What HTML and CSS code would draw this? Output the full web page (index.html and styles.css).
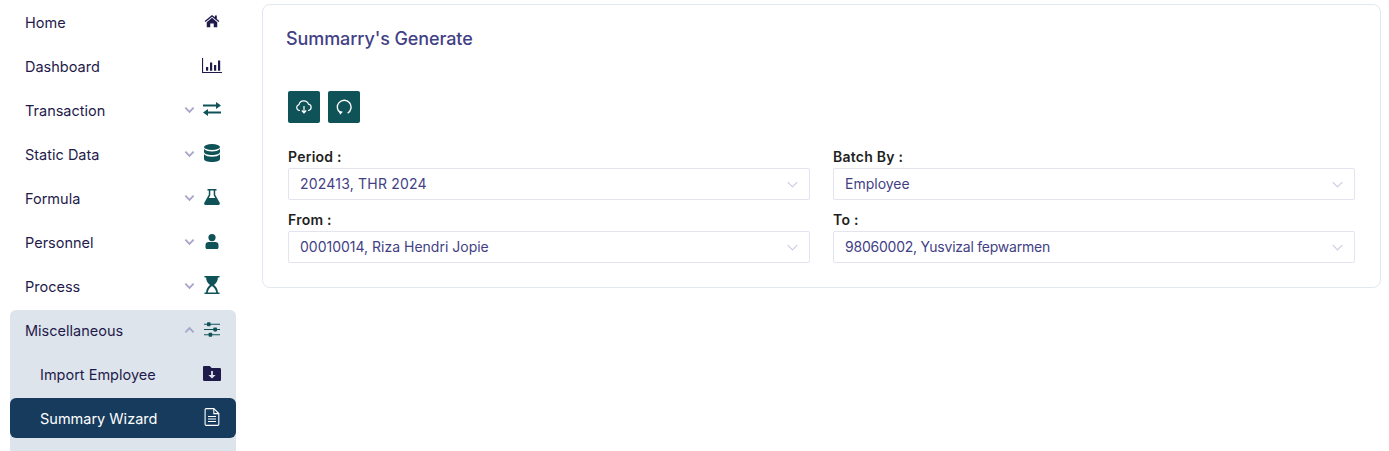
FILE: index.html
```html
<!DOCTYPE html>
<html lang="en">
<head>
<meta charset="utf-8">
<title>Summary Wizard</title>
<link rel="stylesheet" href="styles.css">
</head>
<body>
<div class="app">
  <nav class="sidebar">
    <a class="item"><span class="label">Home</span>
      <svg class="icon navy h14" viewBox="0 0 18 16"><path d="M9 1 .6 8l1 1.200L9 3.100l7.400 6.100 1-1.200L14.500 5.600V1.600h-2.200v2.200L9 1Z"/><path d="M9 4.400 3 9.400v5.600h4v-4.200h4V15h4V9.400L9 4.400Z"/></svg></a>
    <a class="item"><span class="label">Dashboard</span>
      <svg class="icon navy h15" viewBox="0 0 20 15"><path d="M0 0h1.100v13.900H20V15H0V0Z"/><path d="M4 9h2.200v3.800H4zM8 4.500h2.200v8.300H8zM12 7h2.200v5.800H12zM16 2.600h2.200v10.200H16z"/></svg></a>
    <a class="item"><span class="label">Transaction</span>
      <svg class="chev" viewBox="0 0 12 8"><path d="M1.500 1.500 6 6l4.500-4.500"/></svg>
      <svg class="icon teal h14" viewBox="0 0 18 14"><path d="M0 2.500h13V0l5 3.500L13 7V4.500H0v-2ZM18 9.500H5V7l-5 3.500L5 14v-2.500h13v-2Z"/></svg></a>
    <a class="item"><span class="label">Static Data</span>
      <svg class="chev" viewBox="0 0 12 8"><path d="M1.500 1.500 6 6l4.500-4.500"/></svg>
      <svg class="icon teal h18" viewBox="0 0 16 18"><ellipse cx="8" cy="3" rx="8" ry="3"/><path d="M0 5c1.500 1.700 4.500 2.500 8 2.500S14.500 6.700 16 5v3c0 1.700-3.600 3-8 3S0 9.700 0 8V5Z"/><path d="M0 10.200c1.500 1.700 4.500 2.500 8 2.500s6.500-.8 8-2.500V15c0 1.700-3.600 3-8 3s-8-1.300-8-3v-4.800Z"/></svg></a>
    <a class="item"><span class="label">Formula</span>
      <svg class="chev" viewBox="0 0 12 8"><path d="M1.500 1.500 6 6l4.500-4.500"/></svg>
      <svg class="icon teal h16" viewBox="0 0 16 16"><path d="M3.500 0h9v1.500h-1.300v4.300l4.500 8c.5 1-.1 2.200-1.300 2.200H1.600C.4 16-.2 14.800.3 13.800l4.500-8V1.500H3.500V0Zm2.800 1.500v4.700L4.800 9h6.400L9.700 6.200V1.500H6.300Z"/></svg></a>
    <a class="item"><span class="label">Personnel</span>
      <svg class="chev" viewBox="0 0 12 8"><path d="M1.500 1.500 6 6l4.500-4.500"/></svg>
      <svg class="icon teal h15" viewBox="0 0 13 15"><circle cx="6.500" cy="3.600" r="3.600"/><path d="M3 8h7c1.700 0 3 1.300 3 3v2.500c0 .8-.7 1.500-1.500 1.500h-10C.7 15 0 14.300 0 13.500V11c0-1.700 1.300-3 3-3Z"/></svg></a>
    <a class="item"><span class="label">Process</span>
      <svg class="chev" viewBox="0 0 12 8"><path d="M1.500 1.500 6 6l4.500-4.500"/></svg>
      <svg class="icon teal h18" viewBox="0 0 15 18"><path fill-rule="evenodd" d="M0 0h15v1.500h-1.600c0 3-1.500 5.800-3.900 7.500 2.400 1.700 3.900 4.500 3.900 7.500H15V18H0v-1.500h1.600c0-3 1.500-5.800 3.900-7.500C3.100 7.300 1.600 4.500 1.600 1.500H0V0Zm7.500 10.100c-2.200 1.300-3.900 3.600-4.200 6.400h8.400c-.3-2.800-2-5.100-4.200-6.400Z"/></svg></a>
    <div class="group">
      <a class="item"><span class="label">Miscellaneous</span>
        <svg class="chev" viewBox="0 0 12 8"><path d="M1.500 6.500 6 2l4.500 4.500"/></svg>
        <svg class="icon teal h15" viewBox="0 0 16 15"><path d="M0 1.700h16v1.100H0zM0 6.900h16V8H0zM0 12.200h16v1.100H0z"/><rect x="3" y=".2" width="3.600" height="4" rx=".8"/><rect x="9.400" y="5.400" width="3.600" height="4" rx=".8"/><rect x="4.600" y="10.700" width="3.600" height="4" rx=".8"/></svg></a>
      <a class="item sub"><span class="label">Import Employee</span>
        <svg class="icon navy h15" viewBox="0 0 18 15"><path fill-rule="evenodd" d="M0 1.200C0 .5.500 0 1.200 0h5.500l2 2h8c.7 0 1.300.6 1.300 1.300v10.400c0 .7-.6 1.300-1.300 1.300H1.200C.5 15 0 14.500 0 13.800V1.200Zm8.100 3.800v4H5.400l3.600 3.600L12.600 9H9.900V5H8.100Z"/></svg></a>
      <a class="item sub active"><span class="label">Summary Wizard</span>
        <svg class="icon line h18" viewBox="0 0 15 18"><path d="M1.700.6h7.600l5 5v10.600c0 .7-.5 1.200-1.100 1.200H1.700c-.6 0-1.100-.5-1.100-1.200V1.800C.6 1.100 1.100.6 1.700.6Z"/><path d="M9.300.6v5h5M3.500 8.500h8M3.500 11h8M3.500 13.500h8"/></svg></a>
    </div>
  </nav>
  <main class="main">
    <section class="card">
      <h1 class="title">Summarry's Generate</h1>
      <div class="actions">
        <button class="btn" type="button"><svg viewBox="0 0 16 14"><path d="M4 10.500H3.500A3 3 0 0 1 3 4.600 5 5 0 0 1 12.500 4.200 3.200 3.200 0 0 1 12.500 10.500H12M8 6v6.500M5.800 10.500 8 12.800l2.200-2.300"/></svg></button>
        <button class="btn" type="button"><svg class="refresh" viewBox="0 0 14 14"><path d="M4 12.200A6 6 0 1 1 10.200 12.300"/><path class="fill" d="M2.600 10.200 6 11.200 3.600 13.800Z"/></svg></button>
      </div>
      <div class="form">
        <div class="field"><label class="field-label">Period :</label>
          <div class="select"><span class="wide">202413, THR 2024</span><svg class="caret" viewBox="0 0 12 7"><path d="M.8.800 6 6l5.200-5.200"/></svg></div></div>
        <div class="field"><label class="field-label">Batch By :</label>
          <div class="select"><span>Employee</span><svg class="caret" viewBox="0 0 12 7"><path d="M.8.800 6 6l5.200-5.200"/></svg></div></div>
        <div class="field"><label class="field-label">From :</label>
          <div class="select"><span>00010014, Riza Hendri Jopie</span><svg class="caret" viewBox="0 0 12 7"><path d="M.8.800 6 6l5.200-5.200"/></svg></div></div>
        <div class="field"><label class="field-label">To :</label>
          <div class="select"><span class="narrow">98060002, Yusvizal fepwarmen</span><svg class="caret" viewBox="0 0 12 7"><path d="M.8.800 6 6l5.200-5.200"/></svg></div></div>
      </div>
    </section>
  </main>
</div>
</body>
</html>
```
FILE: styles.css
```css
* { box-sizing: border-box; }
html, body { margin: 0; height: 100%; overflow: hidden; background: #fff; }
body { font-family: Inter, "Liberation Sans", sans-serif; font-size: 14px; color: #1e1b4b; }
.app { display: flex; height: 451px; overflow: hidden; }
.sidebar { width: 226px; margin-left: 10px; padding-top: 2px; display: flex; flex-direction: column; gap: 4px; flex: none; }
.item { height: 40px; display: flex; align-items: center; padding: 0 15px; border-radius: 6px; color: #1e1b4b; flex: none; }
.label { flex: 1; font-size: 14.500px; line-height: 20px; padding-top: 2px; }
.sub { padding-left: 30px; }
.group { background: #dee4ec; border-radius: 6px; display: flex; flex-direction: column; gap: 4px; flex: none; height: 200px; }
.active { background: #173b5c; color: #fff; }
.chev { width: 11px; height: 8px; margin-right: 7px; fill: none; stroke: #a8a5cc; stroke-width: 2; }
.icon { width: 20px; flex: none; margin-top: -2px; margin-right: -1px; }
.h14 { height: 14px; }
.h15 { height: 15px; }
.h16 { height: 16px; }
.h18 { height: 18px; }
.navy { fill: #1e1b4b; }
.teal { fill: #0f5257; }
.line { fill: none; stroke: #fff; stroke-width: 1.100; }
.main { flex: 1; padding: 4px 8px 0 26px; min-width: 0; }
.card { height: 284px; border: 1px solid #e2e8f0; border-radius: 8px; padding: 0 25px; background: #fff; }
.title { margin: 0 0 0 -2px; padding-top: 21px; font-size: 18px; font-weight: 500; line-height: 26px; color: #433f85; letter-spacing: -0.1px; }
.actions { display: flex; gap: 8px; margin-top: 39px; }
.btn { width: 32px; height: 32px; padding: 0; border: 0; border-radius: 2px; background: #0f5257; display: flex; align-items: center; justify-content: center; }
.btn svg { width: 16px; height: 14px; fill: none; stroke: #fff; stroke-width: 1.200; }
.btn .refresh { width: 16px; height: 16px; }
.btn .fill { fill: #fff; stroke: none; }
.form { display: grid; grid-template-columns: 522px 522px; column-gap: 23px; row-gap: 10px; margin-top: 24px; }
.field { display: flex; flex-direction: column; }
.field-label { font-size: 14px; font-weight: 600; line-height: 20px; height: 21px; color: #1f1f23; letter-spacing: 0.25px; }
.select { height: 32px; border: 1px solid #e2e4ef; border-radius: 2px; display: flex; align-items: center; justify-content: space-between; padding: 0 11px 2px 11px; font-size: 14px; color: #433f85; }
.wide { letter-spacing: 0.2px; }
.narrow { letter-spacing: -0.23px; }
.caret { width: 11px; height: 7px; margin-top: 2px; fill: none; stroke: #c9c7e0; stroke-width: 1.100; }
```
